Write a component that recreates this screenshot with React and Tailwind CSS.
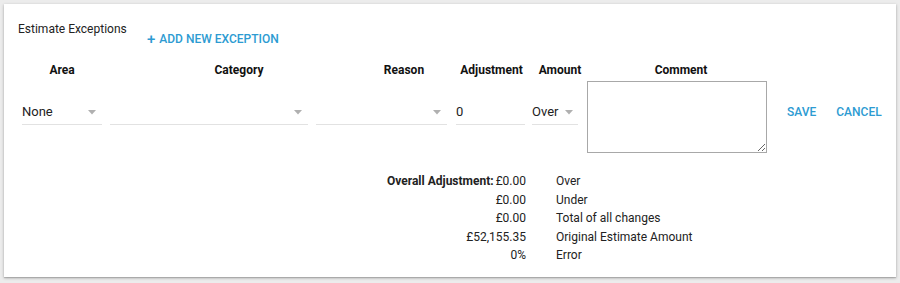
import React from 'react';

const BLUE = 'text-[#2d9bd2]';

function Caret() {
    return (
        <svg width="8" height="5" viewBox="0 0 8 5" className="shrink-0">
            <path d="M0 0 L8 0 L4 4.5 Z" fill="#b0b0b0" />
        </svg>
    );
}

function SelectField({ width, value }) {
    return (
        <div className={`flex h-[44px] items-end border-b border-[#e2e2e2] pb-[2px] ${width}`}>
            <div className="flex h-[20px] w-full items-center justify-between pr-[6px]">
                <span className="text-[13px] text-[#222]">{value}</span>
                <Caret />
            </div>
        </div>
    );
}

const headers = [
    ['Area', 'w-[88px]'],
    ['Category', 'w-[266px]'],
    ['Reason', 'w-[64px]'],
    ['Adjustment', 'w-[111px]'],
    ['Amount', 'w-[26px]'],
    ['Comment', 'w-[216px]'],
];

const summary = [
    ['£0.00', 'Over', true],
    ['£0.00', 'Under'],
    ['£0.00', 'Total of all changes'],
    ['£52,155.35', 'Original Estimate Amount'],
    ['0%', 'Error'],
];

export default function App() {
    return (
        <div className="h-[283px] bg-[#ececec] pt-[4px] font-['Roboto',sans-serif]">
            <div className="mx-[4px] h-[273px] bg-white pl-[14px] pt-[17px] shadow-[0_1px_3px_rgba(0,0,0,0.25),0_1px_1px_rgba(0,0,0,0.14)]">
                {/* title row */}
                <div className="flex items-start">
                    <div className="w-[129px] text-[12px] leading-[16px] text-[#222]">Estimate Exceptions</div>
                    <button className={`mt-[10px] flex items-center gap-[4px] text-[12px] font-medium leading-[16px] ${BLUE}`}>
                        <span className="text-[15px] leading-[16px]">+</span>
                        ADD NEW EXCEPTION
                    </button>
                </div>

                {/* column headers */}
                <div className="mt-[15px] flex">
                    {headers.map(([label, w]) => (
                        <div key={label} className={`flex justify-center ${w}`}>
                            <span className="whitespace-nowrap text-[12px] font-bold leading-[16px] text-[#111]">{label}</span>
                        </div>
                    ))}
                </div>

                {/* inputs */}
                <div className="mt-[3px] flex items-start">
                    <div className="ml-[4px]">
                        <SelectField width="w-[80px]" value="None" />
                    </div>
                    <div className="ml-[8px]">
                        <SelectField width="w-[198px]" value="" />
                    </div>
                    <div className="ml-[8px]">
                        <SelectField width="w-[131px]" value="" />
                    </div>
                    <div className="ml-[9px] flex h-[44px] w-[69px] items-end border-b border-[#e2e2e2] pb-[2px]">
                        <span className="flex h-[20px] items-center text-[13px] text-[#222]">0</span>
                    </div>
                    <div className="ml-[7px]">
                        <div className="flex h-[44px] w-[46px] items-end border-b border-[#e2e2e2] pb-[2px]">
                            <div className="flex h-[20px] w-full items-center justify-between pr-[5px]">
                                <span className="text-[13px] text-[#222]">Over</span>
                                <Caret />
                            </div>
                        </div>
                    </div>
                    <textarea className="ml-[9px] h-[72px] w-[180px] border border-[#a8a8a8] text-[13px]" />
                    <div className={`ml-[20px] flex h-[44px] items-end pb-[3px] text-[12px] font-medium ${BLUE}`}>
                        <span className="flex h-[20px] items-center">SAVE</span>
                    </div>
                    <div className={`ml-[20px] flex h-[44px] items-end pb-[3px] text-[12px] font-medium ${BLUE}`}>
                        <span className="flex h-[20px] items-center">CANCEL</span>
                    </div>
                </div>

                {/* summary */}
                <div className="mt-[19px] ml-[308px] flex flex-col text-[12px] leading-[18.5px] text-[#222]">
                    {summary.map(([value, label, first]) => (
                        <div key={label} className="flex">
                            <div className="w-[200px] text-right">
                                {first && <span className="mr-[2px] font-bold">Overall Adjustment:</span>}
                                {value}
                            </div>
                            <div className="ml-[30px]">{label}</div>
                        </div>
                    ))}
                </div>
            </div>
        </div>
    );
}
